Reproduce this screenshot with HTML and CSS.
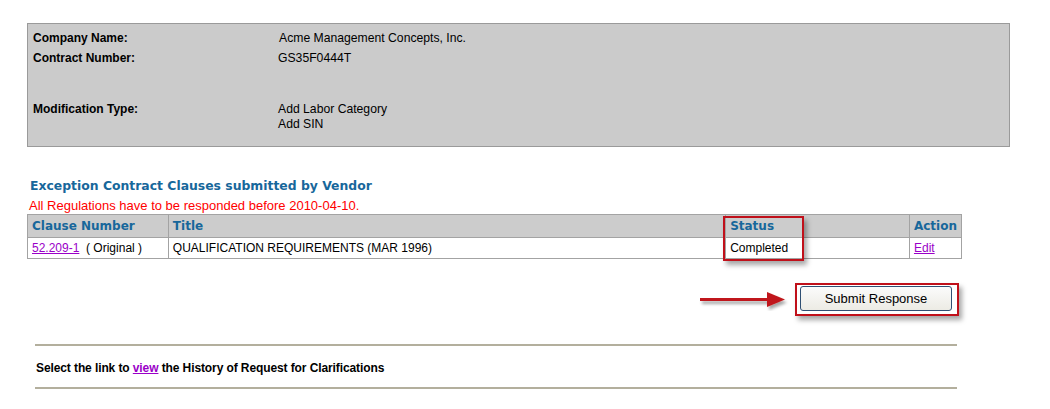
FILE: index.html
```html
<!DOCTYPE html>
<html>
<head>
<meta charset="utf-8">
<link rel="stylesheet" href="styles.css">
</head>
<body>
<div class="page">
  <div class="info">
    <div class="row r1"><span class="lbl">Company Name:</span><span class="val v1">Acme Management Concepts, Inc.</span></div>
    <div class="row r2"><span class="lbl">Contract Number:</span><span class="val">GS35F0444T</span></div>
    <div class="row r3"><span class="lbl">Modification Type:</span><span class="val">Add Labor Category<br>Add SIN</span></div>
  </div>

  <h2 class="heading">Exception Contract Clauses submitted by Vendor</h2>
  <div class="warn">All Regulations have to be responded before 2010-04-10.</div>

  <table class="clauses">
    <thead>
      <tr>
        <th class="c1">Clause Number</th>
        <th class="c2">Title</th>
        <th class="c3">Status<span class="hl"></span></th>
        <th class="c4">Action</th>
      </tr>
    </thead>
    <tbody>
      <tr>
        <td><a href="#">52.209-1</a>&nbsp; ( Original )</td>
        <td>QUALIFICATION REQUIREMENTS (MAR 1996)</td>
        <td>Completed</td>
        <td><a href="#">Edit</a></td>
      </tr>
    </tbody>
  </table>

  <div class="submit-row">
    <svg class="arrow" width="92" height="20" viewBox="0 0 92 20">
      <defs>
        <filter id="sh" x="-10%" y="-50%" width="130%" height="250%">
          <feDropShadow dx="2" dy="3" stdDeviation="1.5" flood-color="#000" flood-opacity="0.35"/>
        </filter>
      </defs>
      <g filter="url(#sh)">
        <rect x="1" y="7" width="70" height="3" fill="#c0181b"/>
        <polygon points="68,1 86,8.5 68,16" fill="#c0181b"/>
      </g>
    </svg>
    <div class="btn-wrap">
      <button class="btn" type="button">Submit Response</button>
    </div>
  </div>

  <div class="history">
    Select the link to <a href="#">view</a> the History of Request for Clarifications
  </div>
</div>
</body>
</html>
```
FILE: styles.css
```css
html, body {
  margin: 0;
  padding: 0;
  background: #ffffff;
}
body {
  font-family: "Liberation Sans", Arial, sans-serif;
  font-size: 12px;
  color: #000;
}
.page {
  padding: 23px 0 0 27px;
  width: 986px;
}
.info {
  width: 983px;
  height: 124px;
  box-sizing: border-box;
  border: 1px solid #9a9a9a;
  background: #cbcbcb;
  padding: 7px 0 0 5px;
}
.row {
  display: flex;
  line-height: 15px;
}
.r2 { margin-top: 5px; }
.r3 { margin-top: 36px; }
.lbl {
  width: 245px;
  font-weight: bold;
}
.val { font-size: 12.2px; }
.v1 { padding-left: 1px; }
.heading {
  margin: 31px 0 0 3px;
  font-family: "DejaVu Sans", Verdana, sans-serif;
  font-size: 12.4px;
  font-weight: bold;
  color: #17679b;
  line-height: 16px;
}
.warn {
  margin: 4px 0 0 2px;
  color: #ff0000;
  font-size: 13px;
  line-height: 16px;
}
.clauses {
  margin-top: 0;
  width: 935px;
  border-collapse: collapse;
  border: 1px solid #a3a3a3;
  font-size: 12px;
}
.clauses th {
  background: #cccccc;
  font-family: "DejaVu Sans", Verdana, sans-serif;
  font-size: 12px;
  font-weight: bold;
  color: #17679b;
  text-align: left;
  height: 22px;
  padding: 0 4px;
  border: 1px solid #a3a3a3;
}
.clauses td {
  height: 20px;
  padding: 0 4px;
  border: 1px solid #a3a3a3;
}
.c1 { width: 132px; }
.c2 { width: 549px; }
.c3 { width: 175px; position: relative; }
.hl {
  position: absolute;
  left: -3px;
  top: 1px;
  width: 77px;
  height: 41px;
  border: 2px solid #c0101a;
  box-shadow: 3px 4px 5px rgba(0,0,0,0.35);
}
a {
  color: #9a00c8;
  text-decoration: underline;
}
.submit-row {
  width: 935px;
  display: flex;
  justify-content: flex-end;
  align-items: center;
  margin-top: 24px;
  padding-right: 3px;
  box-sizing: border-box;
}
.arrow {
  display: block;
  margin-right: 4px;
  margin-top: 2px;
}
.btn-wrap {
  border: 2px solid #c0101a;
  padding: 1px 5px 3px 3px;
  box-shadow: 3px 4px 5px rgba(0,0,0,0.35);
}
.btn {
  display: block;
  width: 152px;
  height: 25px;
  border: 1px solid #2f4f73;
  border-radius: 3px;
  background: linear-gradient(#fbfbfb, #ecebe4);
  font-family: "Liberation Sans", Arial, sans-serif;
  font-size: 13px;
  color: #000;
  padding: 0;
}
.history {
  margin: 28px 0 0 8px;
  width: 921px;
  border-top: 2px solid #b3af9d;
  border-bottom: 2px solid #b3af9d;
  padding: 14px 0 11px 1px;
  line-height: 16px;
  font-weight: bold;
  letter-spacing: -0.1px;
}
```
